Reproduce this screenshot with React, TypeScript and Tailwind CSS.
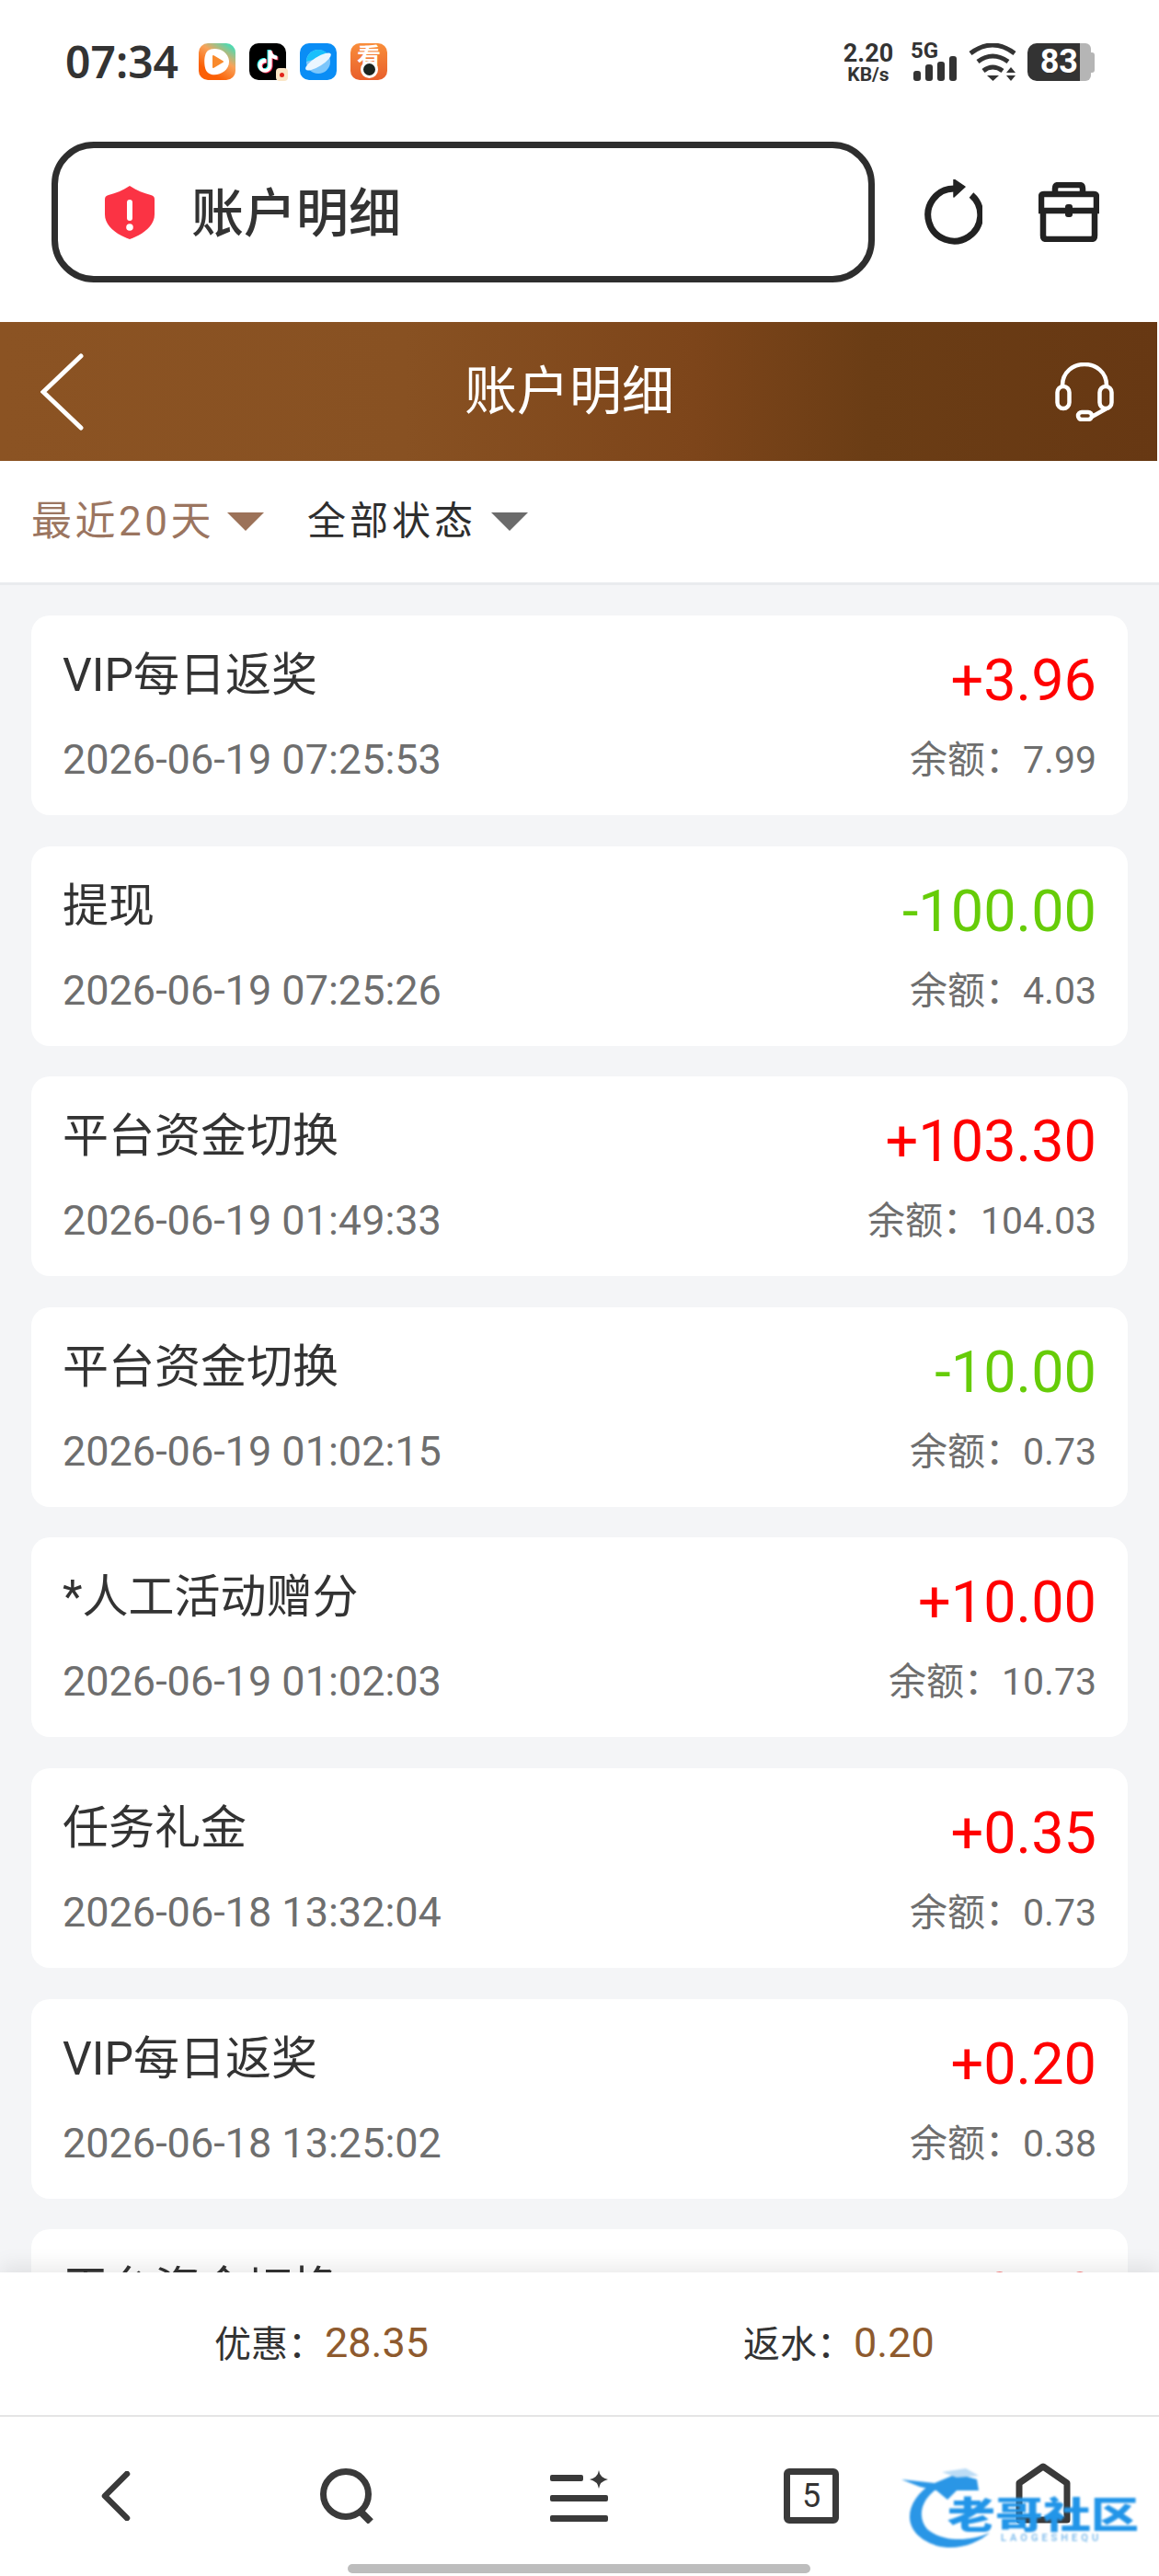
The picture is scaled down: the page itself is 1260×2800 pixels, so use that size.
import React from "react";

interface Row {
  title: string;
  time?: string;
  amount: string;
  balance?: string;
}

const rows: Row[] = [
  { title: "VIP每日返奖", time: "2026-06-19 07:25:53", amount: "+3.96", balance: "7.99" },
  { title: "提现", time: "2026-06-19 07:25:26", amount: "-100.00", balance: "4.03" },
  { title: "平台资金切换", time: "2026-06-19 01:49:33", amount: "+103.30", balance: "104.03" },
  { title: "平台资金切换", time: "2026-06-19 01:02:15", amount: "-10.00", balance: "0.73" },
  { title: "*人工活动赠分", time: "2026-06-19 01:02:03", amount: "+10.00", balance: "10.73" },
  { title: "任务礼金", time: "2026-06-18 13:32:04", amount: "+0.35", balance: "0.73" },
  { title: "VIP每日返奖", time: "2026-06-18 13:25:02", amount: "+0.20", balance: "0.38" },
  { title: "平台资金切换", amount: "+0.50" },
];

const TIKTOK =
  "M12.525.02c1.31-.02 2.61-.01 3.91-.02.08 1.53.63 3.09 1.75 4.17 1.12 1.11 2.7 1.62 4.24 1.79v4.03c-1.44-.05-2.89-.35-4.2-.97-.57-.26-1.1-.59-1.62-.93-.01 2.92.01 5.84-.02 8.75-.08 1.4-.54 2.79-1.35 3.94-1.31 1.92-3.58 3.17-5.91 3.21-1.43.08-2.86-.31-4.08-1.03-2.02-1.19-3.44-3.37-3.65-5.71-.02-.5-.03-1-.01-1.49.18-1.9 1.12-3.72 2.58-4.96 1.66-1.44 3.98-2.13 6.15-1.72.02 1.48-.04 2.96-.04 4.44-.99-.32-2.15-.23-3.02.37-.63.41-1.11 1.04-1.36 1.75-.21.51-.15 1.07-.14 1.61.24 1.64 1.82 3.02 3.5 2.87 1.12-.01 2.19-.66 2.77-1.61.19-.33.4-.67.41-1.06.1-1.79.06-3.57.07-5.36.01-4.03-.01-8.05.02-12.07z";

const StatusBar = () => (
  <div className="h-[154px] flex items-start pt-[47px] pl-[71px]">
    <span className="text-[48px] leading-[40px] font-semibold text-[#333] font-['Noto_Sans',sans-serif] w-[145px]">07:34</span>
    <div className="flex gap-[15px]">
      {/* video app */}
      <div className="w-[40px] h-[40px] rounded-[10px] bg-[linear-gradient(35deg,#fb5f05_25%,#f9a35a_60%,#52d8b0_90%)] flex items-center justify-center">
        <svg width="30" height="32" viewBox="0 0 30 32">
          <path d="M5 4 C12 -1 27 3 28 15 C29 28 12 34 5 28 C0 24 0 8 5 4Z" fill="#fff" />
          <path d="M11 10 L21 16 L11 22Z" fill="#f98a2c" stroke="#f98a2c" strokeWidth="2" strokeLinejoin="round" />
        </svg>
      </div>
      {/* douyin */}
      <div className="relative w-[40px] h-[40px] rounded-[10px] bg-black flex items-center justify-center">
        <svg width="26" height="28" viewBox="0 0 26 28">
          <path d={TIKTOK} fill="#25f4ee" transform="translate(0 1)" />
          <path d={TIKTOK} fill="#fe2c55" transform="translate(2 2.5)" />
          <path d={TIKTOK} fill="#fff" transform="translate(1 1.8)" />
        </svg>
        <div className="absolute right-[-2px] bottom-[-1px] w-[13px] h-[14px] rounded-[4px] bg-[#fbe6c6] flex items-center justify-center">
          <span className="block w-[5px] h-[5px] rounded-full bg-[#e2231a]"></span>
        </div>
      </div>
      {/* browser */}
      <div className="w-[40px] h-[40px] rounded-[10px] bg-[#0a8df5] flex items-center justify-center">
        <svg width="32" height="32" viewBox="0 0 32 32">
          <circle cx="16" cy="16" r="13" fill="#7cc6fb" />
          <path d="M3 16 A13 13 0 0 1 27 9 Z" fill="#19c0fb" />
          <ellipse cx="16" cy="16" rx="16" ry="5" fill="#eaf6ff" transform="rotate(-32 16 16)" />
        </svg>
      </div>
      {/* camera */}
      <div className="relative w-[40px] h-[40px] rounded-[10px] bg-[linear-gradient(180deg,#f98d3a,#e85f2c)] flex justify-center">
        <span className="text-[26px] leading-[26px] font-bold text-white font-['Noto_Sans_CJK_SC',sans-serif]">看</span>
        <span className="absolute left-[11px] top-[19px] w-[19px] h-[19px] rounded-full bg-[#1c2420] border-[3px] border-white"></span>
      </div>
    </div>

    <div className="ml-auto flex items-start">
      <div className="w-[54px] flex flex-col items-center font-['Roboto',sans-serif] font-bold text-[#333]">
        <span className="text-[27px] leading-[22px]">2.20</span>
        <span className="text-[21px] leading-[20px] mt-[2px]">KB/s</span>
      </div>
      <div className="relative w-[50px] h-[41px] ml-[19px] flex items-end gap-[5px] pl-[3px]">
        <span className="absolute left-0 top-[-3px] text-[24px] leading-[22px] font-bold text-[#333] font-['Roboto',sans-serif]">5G</span>
        <span className="w-[8px] h-[11px] rounded-[3px] bg-[#333]"></span>
        <span className="w-[8px] h-[18px] rounded-[3px] bg-[#333]"></span>
        <span className="w-[8px] h-[21px] rounded-[3px] bg-[#333]"></span>
        <span className="w-[8px] h-[27px] rounded-[3px] bg-[#333]"></span>
      </div>
      <svg className="ml-[13px]" width="53" height="41" viewBox="0 0 53 41" fill="none" stroke="#333" strokeWidth="5">
        <path d="M2 11 Q26 -7 50 11" />
        <path d="M10 20 Q26 8 43 20" />
        <path d="M16 30 Q26 22 37 30" />
        <path d="M20 35 H33 L26.5 41Z" fill="#333" stroke="none" />
        <path d="M41 32 H51 L46 26Z" fill="#333" stroke="none" />
        <path d="M41 35 H51 L46 41Z" fill="#333" stroke="none" />
      </svg>
      <div className="ml-[11px] mr-[70px] flex items-center h-[41px]">
        <div className="w-[57px] h-[41px] rounded-l-[10px] bg-[#333] flex items-center justify-end pr-[2px]">
          <span className="text-[36px] leading-[41px] font-bold text-white font-['Roboto',sans-serif]">83</span>
        </div>
        <div className="w-[12px] h-[41px] rounded-r-[6px] bg-[#b5b5b5]"></div>
        <div className="w-[4px] h-[22px] rounded-r-[3px] bg-[#b5b5b5]"></div>
      </div>
    </div>
  </div>
);

const AddressBar = () => (
  <div className="h-[153px] flex items-center pl-[56px]">
    <div className="w-[895px] h-[153px] rounded-[46px] border-[7px] border-[#2e2e2e] flex items-center pl-[51px]">
      <svg width="54" height="58" viewBox="0 0 54 58">
        <path d="M27 0 C35 5 42 8 50 10 C53 11 54 12 54 15 V31 C54 44 41 53 27 58 C13 53 0 44 0 31 V15 C0 12 1 11 4 10 C12 8 19 5 27 0Z" fill="#fb3344" />
        <rect x="24" y="15" width="6" height="23" rx="3" fill="#fff" />
        <circle cx="27" cy="45" r="3.8" fill="#fff" />
      </svg>
      <span className="ml-[40px] mt-[5px] text-[57px] leading-[70px] font-medium text-[#333]">账户明细</span>
    </div>
    <svg className="ml-[53px]" width="64" height="71" viewBox="0 0 64 71" fill="none">
      <path d="M52 17 A28.5 28.5 0 1 1 33 10" stroke="#222" strokeWidth="7" />
      <path d="M33 0 L45 8 L33 19Z" fill="#222" stroke="#222" strokeWidth="1.5" strokeLinejoin="round" />
    </svg>
    <svg className="ml-[61px]" width="66" height="65" viewBox="0 0 66 65" fill="none" stroke="#222" strokeWidth="6.5">
      <path d="M18 13 V7 Q18 3 22 3 H44 Q48 3 48 7 V13" />
      <path d="M6 13 H60 Q63 13 63 16 V31 H3 V16 Q3 13 6 13Z" />
      <path d="M5 31 V58 Q5 62 9 62 H57 Q61 62 61 58 V31" />
      <rect x="29" y="24" width="8" height="14" rx="3" fill="#222" stroke="none" />
    </svg>
  </div>
);

const Banner = () => (
  <div className="mt-[43px] mr-[2px] h-[151px] bg-[linear-gradient(90deg,#8b5323,#885122_35%,#7d451a_60%,#6b3d15_75%,#673813)] flex items-center justify-between pl-[44px] pr-[47px]">
    <svg width="47" height="84" viewBox="0 0 47 84" fill="none" stroke="#fff" strokeWidth="5" strokeLinecap="round">
      <path d="M44 3 L3 42 L44 81" />
    </svg>
    <span className="text-[57px] leading-[70px] text-white">账户明细</span>
    <svg width="64" height="64" viewBox="0 0 64 64" fill="none" stroke="#fff" strokeWidth="4.5">
      <path d="M8 25 C8 10 20 2 32 2 C44 2 56 10 56 25" />
      <rect x="2.5" y="26" width="13" height="24" rx="6.5" />
      <rect x="48.5" y="26" width="13" height="24" rx="6.5" />
      <rect x="25" y="54" width="15" height="8" rx="4" />
      <path d="M40 59 L56 50" />
    </svg>
  </div>
);

const Filters = () => (
  <div className="h-[135px] bg-white border-b-[3px] border-[#e9ebee] flex items-center pl-[34px]">
    <span className="text-[44px] leading-[60px] tracking-[3.5px] text-[#9b7560]">最近20天</span>
    <span className="ml-[14px] w-0 h-0 border-x-[20px] border-x-transparent border-t-[20px] border-t-[#9c7259]"></span>
    <span className="ml-[47px] text-[42px] leading-[60px] tracking-[4px] text-[#2e2e2e]">全部状态</span>
    <span className="ml-[16px] w-0 h-0 border-x-[20px] border-x-transparent border-t-[20px] border-t-[#6b6b6b]"></span>
  </div>
);

const Card = ({ row }: { row: Row }) => (
  <div className="h-[217px] shrink-0 rounded-[20px] bg-white pl-[34px] pr-[34px] pt-[32px]">
    <div className="flex justify-between items-start h-[60px]">
      <span className="text-[50px] leading-[66px] text-[#333]">{row.title}</span>
      <span className={`text-[63px] leading-[60px] mt-[9px] ${row.amount.startsWith("+") ? "text-[#ff0000]" : "text-[#66cc08]"}`}>
        {row.amount}
      </span>
    </div>
    {row.time && (
      <div className="flex justify-between items-center h-[60px] mt-[35px] text-[#6e6e6e]">
        <span className="text-[45px] leading-[60px]">{row.time}</span>
        <span className="text-[41px] leading-[60px]">余额：{row.balance}</span>
      </div>
    )}
  </div>
);

const Summary = () => (
  <div className="relative h-[155px] shrink-0 bg-white shadow-[0_-8px_20px_rgba(0,0,0,0.08)] flex items-center pl-[233px] gap-[342px] text-[40px] leading-[60px] text-[#333]">
    <span>优惠：<span className="text-[45px] text-[#8e5a2e]">28.35</span></span>
    <span>返水：<span className="text-[45px] text-[#8e5a2e]">0.20</span></span>
  </div>
);

const BottomNav = () => (
  <div className="relative h-[175px] shrink-0 bg-white border-t-2 border-[#e5e5e5]">
    <div className="grid grid-cols-5 h-[130px]">
      <div className="flex items-center justify-center pt-[42px]">
        <svg width="32" height="54" viewBox="0 0 32 54" fill="none" stroke="#3a3a3a" strokeWidth="6.5" strokeLinecap="round" strokeLinejoin="round">
          <path d="M28 3 L4 27 L28 51" />
        </svg>
      </div>
      <div className="flex items-center justify-center pt-[42px]">
        <svg width="60" height="60" viewBox="0 0 60 60" fill="none" stroke="#3a3a3a" strokeWidth="7">
          <circle cx="28" cy="28" r="24.5" />
          <path d="M43 46 L55 58" strokeWidth="8" />
        </svg>
      </div>
      <div className="flex items-center justify-center pt-[42px]">
        <svg width="64" height="56" viewBox="0 0 64 56" fill="#3a3a3a">
          <rect x="0" y="5" width="36" height="7" rx="2" />
          <rect x="0" y="27" width="63" height="7" rx="2" />
          <rect x="0" y="49" width="63" height="7" rx="2" />
          <path d="M53 0 Q54 8 63 10 Q54 12 53 20 Q52 12 43 10 Q52 8 53 0Z" />
        </svg>
      </div>
      <div className="flex items-center justify-center pt-[42px]">
        <div className="w-[60px] h-[60px] rounded-[6px] border-[7px] border-[#3a3a3a] flex items-center justify-center text-[36px] leading-none text-[#333] font-['Roboto',sans-serif]">5</div>
      </div>
      <div className="flex items-center justify-center pt-[36px]">
        <svg width="60" height="66" viewBox="0 0 60 66" fill="none" stroke="#3a3a3a" strokeWidth="7" strokeLinejoin="round">
          <path d="M4 22 L30 4 L56 22 V62 H4Z" />
        </svg>
      </div>
    </div>

    {/* watermark */}
    <div className="absolute left-[980px] top-[56px] w-[262px] h-[88px] blur-[0.8px]">
      <svg className="absolute left-0 top-0" width="120" height="88" viewBox="0 0 120 88">
        <path d="M34 16 C4 34 -4 70 38 84 C60 90 82 82 96 70 C74 80 44 80 28 66 C16 52 22 32 42 20Z" fill="#2a96e6" />
        <path d="M0 12 L36 16 L60 6 L82 12 L84 24 L60 24 L50 34 L38 24 L20 20Z" fill="#2a96e6" />
        <path d="M44 4 L70 0 L84 8 L60 10Z" fill="#bcdcf5" />
      </svg>
      <span className="absolute left-[50px] top-[28px] w-[160px] origin-left scale-x-[1.3] text-[40px] leading-[40px] font-black text-[#2295e8] whitespace-nowrap font-['Noto_Sans_CJK_SC',sans-serif]">老哥社区</span>
      <span className="absolute left-[108px] top-[70px] text-[11px] leading-[12px] tracking-[4px] font-semibold text-[#7fbcec] whitespace-nowrap font-['Roboto',sans-serif]">LAOGESHEQU</span>
    </div>

    {/* home indicator */}
    <div className="absolute left-[378px] top-[160px] w-[503px] h-[10px] rounded-full bg-[#bdbdbd]"></div>
  </div>
);

export default function App() {
  return (
    <div className="w-[1260px] h-[2800px] flex flex-col overflow-hidden bg-white font-['Roboto','Noto_Sans_CJK_SC',sans-serif]">
      <StatusBar />
      <AddressBar />
      <Banner />
      <Filters />
      <div className="flex-1 min-h-0 overflow-hidden bg-[#f4f5f7] px-[34px] pt-[33px] flex flex-col gap-[33.6px]">
        {rows.map((row, i) => (
          <Card key={i} row={row} />
        ))}
      </div>
      <Summary />
      <BottomNav />
    </div>
  );
}
